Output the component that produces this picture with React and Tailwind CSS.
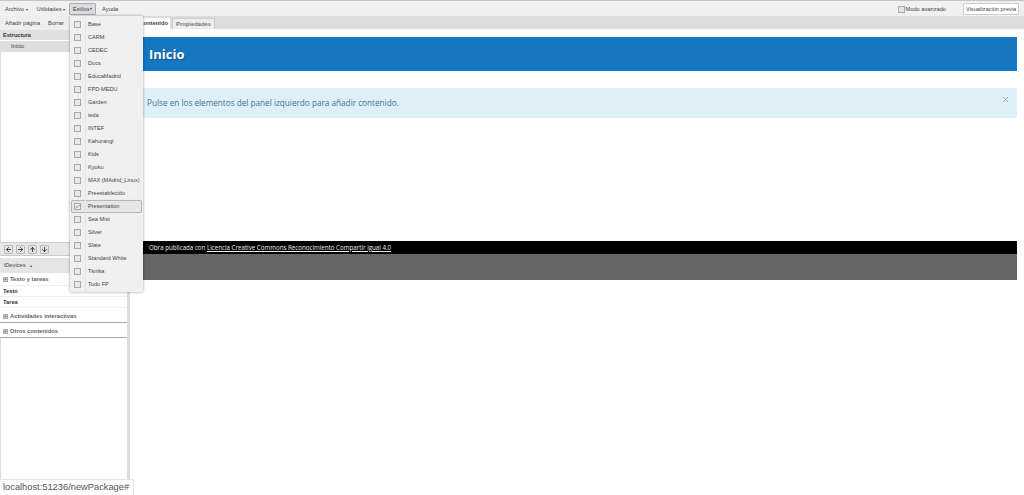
import { ArrowLeft, ArrowRight, ArrowUp, ArrowDown, Check, X } from "lucide-react";

const styles = [
  "Base", "CARM", "CEDEC", "Docs", "EducaMadrid", "FPD-MEDU", "Garden", "ieda", "INTEF", "Kahurangi",
  "Kids", "Kyoku", "MAX (MAdrid_Linux)", "Preestablecido", "Presentation", "Sea Mist", "Silver", "Slate",
  "Standard White", "Tknika", "Todo FP",
];

function MenuItem({ label }) {
  const active = label === "Presentation";
  return (
    <div
      className={
        active
          ? "flex h-[13px] items-center rounded-[2px] border border-[#b5b5b5] bg-[#e6e6e6] shadow-[0_0_1px_#ccc]"
          : "flex h-[13px] items-center border border-transparent"
      }
    >
      <span className="ml-[2px] flex h-[7px] w-[7px] shrink-0 items-center justify-center border border-[#a8a8a8] bg-[#e8e8e8]">
        {active ? <Check size={7} strokeWidth={3} className="text-[#3a55c8]" /> : null}
      </span>
      <span className="ml-[7px] whitespace-nowrap text-[5.6px] text-[#444]">{label}</span>
    </div>
  );
}

function MoveButton({ children }) {
  return (
    <span className="flex h-[9px] w-[9px] items-center justify-center rounded-[1px] border border-[#bbb] bg-[#e2e2e2] text-[#333]">
      {children}
    </span>
  );
}

function GroupTitle({ label }) {
  return (
    <div className="flex h-[12px] items-center gap-[2px] pl-[3px] text-[5.8px] font-bold text-[#666]">
      <span className="flex h-[5px] w-[5px] items-center justify-center border border-[#aaa] bg-[#ccc] text-[4px] leading-none text-[#555]">
        +
      </span>
      {label}
    </div>
  );
}

export default function App() {
  return (
    <div className="relative flex h-[495px] w-[1024px] flex-col overflow-hidden bg-white font-['Liberation_Sans',sans-serif]">
      {/* barra superior */}
      <div className="flex h-[16px] shrink-0 items-center justify-between border-t border-[#c4c4c4] bg-[#f0f0f0] pt-[1px] text-[5.7px] text-[#444]">
        <div className="flex items-center">
          <span className="ml-[5px]">Archivo <span className="text-[4px]">▾</span></span>
          <span className="ml-[9px]">Utilidades <span className="text-[4px]">▾</span></span>
          <span className="ml-[4px] flex h-[12px] w-[27px] items-center justify-center rounded-[1px] border border-[#aab] bg-[#dcdcdc]">Estilos <span className="ml-[1px] text-[4px]">▾</span></span>
          <span className="ml-[6px]">Ayuda</span>
        </div>
        <div className="flex items-center">
          <span className="h-[7px] w-[7px] border border-[#aaa] bg-[#e4e4e4]" />
          <span className="ml-[1px]">Modo avanzado</span>
          <span className="ml-[17px] mr-[5px] flex h-[12px] w-[56px] items-center justify-center whitespace-nowrap rounded-[1px] border border-[#ccc] bg-white">
            Visualización previa
          </span>
        </div>
      </div>

      <div className="flex min-h-0 flex-1">
        {/* panel izquierdo */}
        <div className="flex w-[130px] shrink-0 flex-col border-r-[3px] border-[#dcdcdc] bg-white">
          <div className="flex h-[14px] shrink-0 items-center gap-[8px] bg-[#eee] pl-[5px] text-[5.7px] text-[#444]">
            <span>Añadir página</span>
            <span>Borrar</span>
          </div>
          <div className="flex h-[10px] shrink-0 items-center bg-[#e0e0e0] pl-[3px] text-[5.6px] font-bold text-[#333]">Estructura</div>
          <div className="mt-[1px] flex h-[11px] shrink-0 items-center bg-[#dedede] pl-[11px] text-[5.7px] text-[#444]">Inicio</div>
          <div className="h-[190px] shrink-0 border-x border-[#ddd]" />
          <div className="flex h-[14px] shrink-0 items-center gap-[3px] border-y border-[#ccc] bg-[#e8e8e8] pl-[4px]">
            <MoveButton><ArrowLeft size={7} strokeWidth={3} /></MoveButton>
            <MoveButton><ArrowRight size={7} strokeWidth={3} /></MoveButton>
            <MoveButton><ArrowUp size={7} strokeWidth={3} /></MoveButton>
            <MoveButton><ArrowDown size={7} strokeWidth={3} /></MoveButton>
          </div>
          <div className="mt-[2px] flex h-[15px] shrink-0 items-center bg-[#e4e4e4] pl-[4px] text-[5.7px] text-[#444]">
            iDevices <span className="ml-[4px] text-[4px]">▴</span>
          </div>
          <GroupTitle label="Texto y tareas" />
          <div className="flex h-[11px] items-center border-t border-[#eee] pl-[3px] text-[5.7px] font-bold text-[#333]">Texto</div>
          <div className="flex h-[11px] items-center border-t border-[#eee] pl-[3px] text-[5.7px] font-bold text-[#333]">Tarea</div>
          <div className="border-t border-[#eee] pt-[2px]"><GroupTitle label="Actividades interactivas" /></div>
          <div className="h-[1px] bg-[#b9a2a8]" />
          <div className="pt-[2px]"><GroupTitle label="Otros contenidos" /></div>
          <div className="h-[1px] bg-[#b9a2a8]" />
          <div className="flex-1 border-l border-[#ddd]" />
        </div>

        {/* contenido */}
        <div className="flex min-w-0 flex-1 flex-col">
          <div className="flex h-[13px] shrink-0 items-end bg-[#dcdcdc] pl-[4px] text-[5.8px] font-bold">
            <span className="flex h-[11px] w-[36px] items-center justify-end rounded-t-[1px] bg-white pr-[2px] text-[#444]">Contenido</span>
            <span className="ml-[2px] flex h-[11px] w-[43px] items-center justify-center rounded-t-[1px] border border-b-0 border-[#ccc] bg-[#eee] text-[#777]">Propiedades</span>
          </div>
          <div className="mt-[8px] mr-[7px] flex h-[34px] shrink-0 items-center bg-[#1576c2] pl-[19px] pt-[1px] font-['Open_Sans',sans-serif] text-[13px] font-bold text-white [text-shadow:1px_1px_1px_rgba(0,0,0,0.3)]">
            Inicio
          </div>
          <div className="mt-[17px] mr-[7px] flex h-[30px] shrink-0 items-center justify-between rounded-[2px] bg-[#dfeff7] pl-[17px] pr-[7px] font-['Open_Sans',sans-serif] text-[8.2px] text-[#3f7391]">
            <span>Pulse en los elementos del panel izquierdo para añadir contenido.</span>
            <X size={9} strokeWidth={2.5} className="mb-[8px] text-[#9aa7af]" />
          </div>
          <div className="mt-[123px] mr-[7px] flex h-[13px] shrink-0 items-center bg-black pl-[19px] font-['Open_Sans',sans-serif] text-[6.2px] text-[#eee]">
            Obra publicada con&nbsp;<span className="underline">Licencia Creative Commons Reconocimiento Compartir igual 4.0</span>
          </div>
          <div className="mr-[7px] h-[26px] shrink-0 bg-[#666]" />
        </div>
      </div>

      {/* menú Estilos */}
      <div className="absolute left-[70px] top-[16px] h-[276px] w-[73px] rounded-[1px] bg-[#f0f0f0] pt-[2px] shadow-[0_0_3px_rgba(0,0,0,0.4)]">
        <div className="absolute bottom-0 left-[15px] top-0 w-px bg-[#e2e2e2]" />
        <div className="flex flex-col px-[1px]">
          {styles.map((s) => (
            <MenuItem key={s} label={s} />
          ))}
        </div>
      </div>

      {/* enlace de estado */}
      <div className="absolute bottom-0 left-0 flex h-[16px] w-[134px] items-center rounded-tr-[2px] border-t border-r border-[#e4e4e4] bg-white pl-[3px] text-[9.3px] text-[#555]">
        localhost:51236/newPackage#
      </div>
    </div>
  );
}
